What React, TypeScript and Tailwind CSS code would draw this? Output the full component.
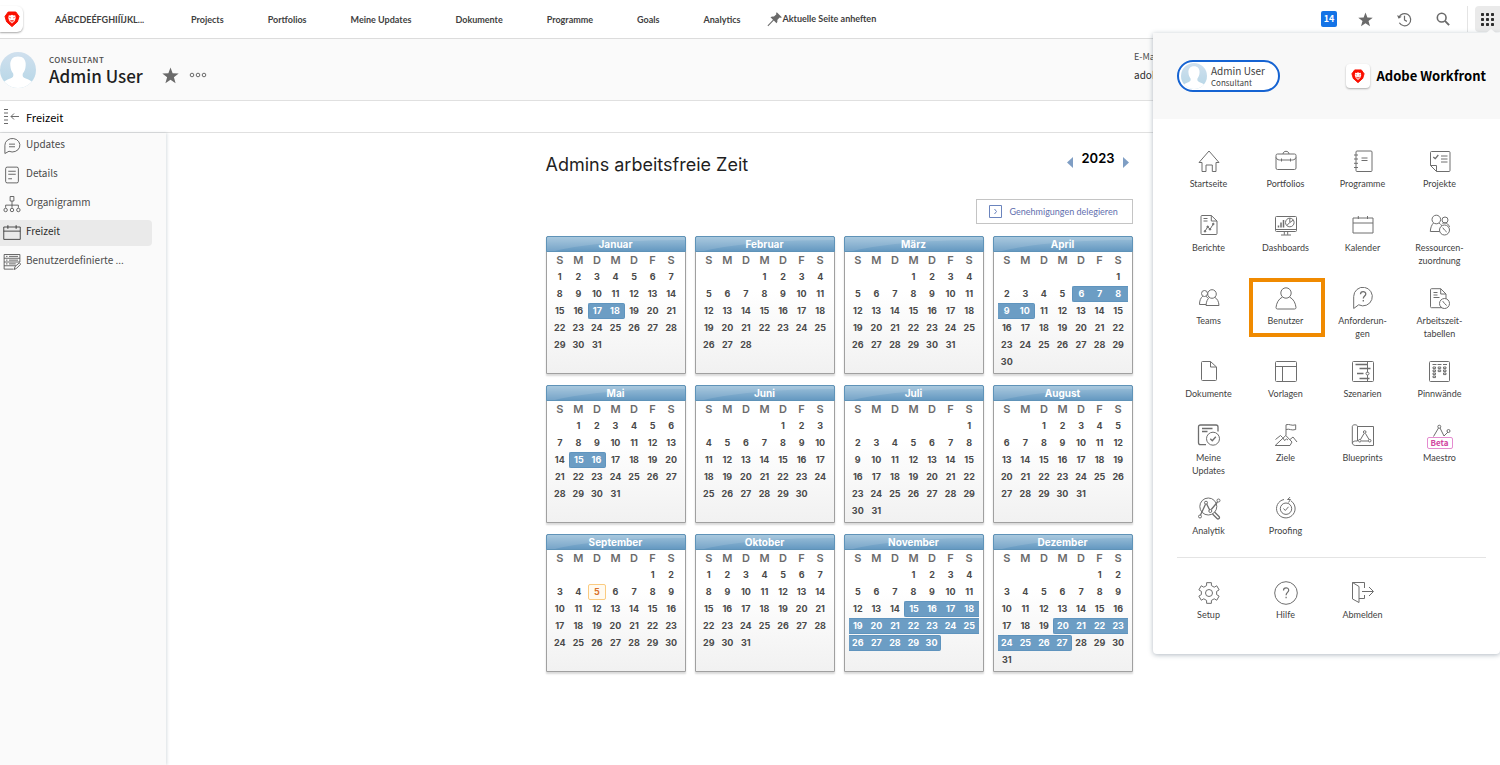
import type { ReactNode } from "react";

const NAV = ["Projects", "Portfolios", "Meine Updates", "Dokumente", "Programme", "Goals", "Analytics"];
const MONTHS = ["Januar", "Februar", "März", "April", "Mai", "Juni", "Juli", "August", "September", "Oktober", "November", "Dezember"];
const WEEKDAYS = ["S", "M", "D", "M", "D", "F", "S"];
const YEAR = 2023;
const TODAY = { month: 8, day: 5 };
const TIME_OFF: Record<number, [number, number]> = {
  0: [17, 18],
  3: [6, 10],
  4: [15, 16],
  10: [15, 30],
  11: [20, 27],
};

function Icon({ children, className = "size-6" }: { children: ReactNode; className?: string }) {
  return (
    <svg viewBox="0 0 24 24" className={className} fill="none" stroke="currentColor" strokeWidth="1" strokeLinejoin="round" aria-hidden="true">
      {children}
    </svg>
  );
}

function Lion({ className }: { className: string }) {
  return (
    <svg viewBox="0 0 16 16" className={className} aria-hidden="true">
      <path d="M4.200 1h7.600l3.200 4.400-1.600 5.400L8 15.600 2.600 10.800 1 5.400z" fill="#fa0f00" stroke="#fa0f00" strokeWidth="1" strokeLinejoin="round" />
      <path d="M4.800 4.200l1.500.4L8 3.800l1.700.8 1.500-.4.500 2.800-1 3L8 12.500l-2.700-2.500L4.300 7z" fill="#fff" />
      <path d="M5.200 6.300l1.800.7M10.800 6.300L9 7M7.200 9.500h1.600L8 10.500zM8 10.500v1.200M6 8.800l.8 1.800M10 8.800l-.8 1.800" fill="#fa0f00" stroke="#fa0f00" strokeWidth=".6" />
    </svg>
  );
}

function Avatar({ className }: { className: string }) {
  return (
    <svg viewBox="0 0 36 36" className={className} aria-hidden="true">
      <defs>
        <linearGradient id="sky" x1="0" y1="0" x2="0" y2="1">
          <stop offset="0" stopColor="#d0e0ee" />
          <stop offset="1" stopColor="#b5d6e6" />
        </linearGradient>
        <clipPath id="disc">
          <circle cx="18" cy="18" r="18" />
        </clipPath>
      </defs>
      <g clipPath="url(#disc)">
        <rect width="36" height="36" fill="url(#sky)" />
        <path d="M18 4.500c5.400 0 8 3.400 7.700 8.800-.2 4-1.400 6.400-2.900 8.200-.6 2.700.2 4 3 5.100 3.700 1.400 6.200 2.600 8.200 5.400V36H2v-4c2-2.800 4.500-4 8.200-5.400 2.800-1.100 3.600-2.400 3-5.100-1.500-1.800-2.700-4.200-2.900-8.200C10 7.900 12.600 4.500 18 4.500z" fill="#fff" />
      </g>
    </svg>
  );
}

function Star({ className }: { className: string }) {
  return (
    <svg viewBox="0 0 16 16" className={className} fill="#6a6a6a" aria-hidden="true">
      <path d="M8 .5l2 5.300 5.700.2-4.500 3.600 1.600 5.600L8 12l-4.800 3.200 1.600-5.600L.3 6 6 5.800z" />
    </svg>
  );
}

const Head = (p: { cx: number; cy: number; r: number }) => <circle {...p} />;
const Clock = ({ cx, cy }: { cx: number; cy: number }) => (
  <>
    <circle cx={cx} cy={cy} r="5" fill="#fff" />
    <path d={`M${cx - 1.8} ${cy - 2.4}L${cx} ${cy}l2.200 2`} />
  </>
);

const gearPoints = Array.from({ length: 6 }, (_, i) =>
  [
    [-13, 10.6],
    [13, 10.6],
    [18, 7.8],
    [42, 7.8],
  ].map(([deg, r]) => {
    const a = ((i * 60 + deg - 90) * Math.PI) / 180;
    return `${(12 + r * Math.cos(a)).toFixed(2)},${(12 + r * Math.sin(a)).toFixed(2)}`;
  }),
)
  .flat()
  .join(" ");

const calendarIcon = (
  <>
    <path d="M2 4h20v15H2zM2 9h20" />
    <path d="M7.300 2v3M16.500 2v3" />
  </>
);

type Item = { label: string[]; icon: ReactNode; marked?: boolean; beta?: boolean };

const ITEMS: Item[] = [
  { label: ["Startseite"], icon: <path d="M2 12.500L12 1l10 11.500M2 12.500h3v9h4v-6.500h6.300v6.500H19v-9h3" /> },
  {
    label: ["Portfolios"],
    icon: (
      <>
        <rect x="2" y="4" width="20" height="15.500" rx="1.500" />
        <path d="M9 4c0-3.600 6-3.600 6 0M2 7.500c1 2.500 3 2.500 4.500 2.500h11c1.500 0 3.500 0 4.500-2.500M7.500 8.500v3M16.500 8.500v3" />
      </>
    ),
  },
  {
    label: ["Programme"],
    icon: (
      <>
        <rect x="5" y="1" width="16" height="20.500" rx="1" />
        <path d="M3 5h4M3 9h4M3 13.300h4M3 17.500h4M10.500 8h6M10.500 10.500h6" />
      </>
    ),
  },
  {
    label: ["Projekte"],
    icon: (
      <>
        <path d="M2.500 15.500V2.500q0-1 1-1H21q1 0 1 1v18q0 1-1 1H8.500zM2.500 15.500h6v6M13 6h6.500M13 9h6.500M13 12h6.500" />
        <path d="M5.300 7l2 1.700L10.300 5" strokeWidth="1.300" />
      </>
    ),
  },
  {
    label: ["Berichte"],
    icon: (
      <>
        <path d="M14.300 1.500H5q-1 0-1 1v17q0 1 1 1h14q1 0 1-1V7zM14.300 1.500V7H20M6.500 4.500h4M6.500 7h4M8 17.300l2.700-4.500 2.300 2.500 3.300-5.300" />
        <g fill="#6e6e6e"><circle cx="8" cy="17.300" r=".8" /><circle cx="10.700" cy="12.800" r=".8" /><circle cx="13" cy="15.300" r=".8" /><circle cx="16.300" cy="10" r=".8" /></g>
      </>
    ),
  },
  {
    label: ["Dashboards"],
    icon: (
      <>
        <rect x="1.500" y="2.500" width="21" height="15" rx="1" />
        <path d="M1.500 15.500h21M10.300 17.500v3.300M13.700 17.500v3.300M7 21h10M15.800 8.500V4.200M15.800 8.500l3.600-2.500M15.800 8.500l-3 3" />
        <path d="M4.500 13.500v-2M7 13.500v-5M9.500 13.500V6" strokeWidth="1.500" />
        <circle cx="15.800" cy="8.500" r="4.300" />
      </>
    ),
  },
  { label: ["Kalender"], icon: calendarIcon },
  {
    label: ["Ressourcen-", "zuordnung"],
    icon: (
      <>
        <Head cx={8.300} cy={5.500} r={4.300} />
        <Head cx={17} cy={6} r={3} />
        <path d="M5.500 9C3.500 11 2.500 14 2.300 17.500h9.500M11 9c1.500.8 2.200 2 2.800 3M14.500 9.500c3-1.500 6 .2 7 3.500" />
        <Clock cx={16.500} cy={16} />
      </>
    ),
  },
  {
    label: ["Teams"],
    icon: (
      <>
        <Head cx={7.500} cy={6.500} r={3} />
        <Head cx={15} cy={7} r={4.300} />
        <path d="M12.300 10.500C10.500 12 9.300 14.500 9 18.500h13c-.3-4-1.500-6.500-4-8M5.800 9.200C3.500 10.800 2.500 14 2.500 17.500h6.500M9.200 9.200l1.500 1.800" />
      </>
    ),
  },
  {
    label: ["Benutzer"],
    marked: true,
    icon: (
      <>
        <Head cx={12} cy={6} r={5.200} />
        <path d="M8.500 10C4.500 12 2.500 16 2 20.500q0 1.500 1.500 1.500h17q1.500 0 1.500-1.500C21.500 16 19.500 12 15.500 10" />
      </>
    ),
  },
  {
    label: ["Anforderun-", "gen"],
    icon: (
      <>
        <path d="M2.700 21.500v-12a9.300 9.300 0 1 1 5 8.300z" />
        <path d="M9.500 7.300c0-3.600 5.300-3.500 5.300-.3 0 2-2.500 2.200-2.500 4.500M12.300 13v1.600" strokeWidth="1.300" />
      </>
    ),
  },
  {
    label: ["Arbeitszeit-", "tabellen"],
    icon: (
      <>
        <path d="M12.700 1.700H3.500q-1 0-1 1v17q0 1 1 1H18V7zM12.700 1.700V7H18M5.500 5.500h4M5.500 8h4M5.500 10.500h6" />
        <Clock cx={16.500} cy={16.500} />
      </>
    ),
  },
  { label: ["Dokumente"], icon: <path d="M13.500 1.500h-8q-1 0-1 1v17q0 1 1 1h13q1 0 1-1V7zM13.500 1.500V7h6" /> },
  {
    label: ["Vorlagen"],
    icon: (
      <>
        <rect x="1.500" y="1.500" width="21" height="20" rx="1" />
        <path d="M1.500 6.500h21M8.500 6.500v15" />
      </>
    ),
  },
  {
    label: ["Szenarien"],
    icon: (
      <>
        <rect x="1.500" y="1.500" width="21" height="20" rx="1" />
        <path d="M16.500 2v10.500M16.500 15v6" />
        <path d="M4.500 4.500h12M8.500 8.500h11M6 13.500h6.500M8.500 18.500h10" strokeWidth="1.500" />
        <circle cx="16.500" cy="13.500" r="1.500" />
      </>
    ),
  },
  {
    label: ["Pinnwände"],
    icon: (
      <>
        <rect x="1.500" y="1.500" width="20" height="20" rx="1" />
        <path d="M4.500 4.500h4M9.500 4.500h4M15 4.500h4" />
        <g strokeWidth="1">
          {[7, 10, 13, 16].map((y) => <rect key={y} x="5" y={y} width="2.500" height="1.600" />)}
          {[7, 10].map((y) => <rect key={y} x="10.200" y={y} width="2.500" height="1.600" />)}
          {[7, 10, 13].map((y) => <rect key={y} x="15.500" y={y} width="2.500" height="1.600" />)}
        </g>
      </>
    ),
  },
  {
    label: ["Meine", "Updates"],
    icon: (
      <>
        <path d="M9 20.700H3.500q-2 0-2-2V3q0-2 2-2H19q2 0 2 2v4.500M5 4.500h10.500M5 7.500h5.500" strokeWidth="1.300" />
        <circle cx="16" cy="14.700" r="6.500" />
        <path d="M13.300 14.700l2 2 3.500-4" strokeWidth="1.300" />
      </>
    ),
  },
  {
    label: ["Ziele"],
    icon: <path d="M12 11.500V.8c3.500-1.300 5.500 1.500 9.700 0v4.700c-4.200 1.500-6.200-1.200-9.700 0M1.200 21.500L11.800 11.500 18 18l-2 3.500zM9 14l1.500 2.500 2-1.500 1.500 1M1.500 15.500L6.500 11.500l2.200 2.200M16 15.500l3-2.500 4 5" />,
  },
  {
    label: ["Blueprints"],
    icon: (
      <>
        <path d="M6.500 2.500h16v19h-18c-4 0-4-4.500 0-4.500h2V2.500c0-2.300-5.200-2.300-5.200 0v17" />
        <path d="M13 9.500l-3.500 6M14.500 9.500l3.500 6M10.500 17h7" />
        <g fill="#fff"><circle cx="13.700" cy="8" r="1.300" /><circle cx="8.800" cy="16.700" r="1.300" /><circle cx="18.700" cy="16.700" r="1.300" /></g>
      </>
    ),
  },
  {
    label: ["Maestro"],
    beta: true,
    icon: (
      <>
        <path d="M5.500 12.500L10.500 4M12 4l4 8M16 12l4-4" />
        <circle cx="11.300" cy="2.700" r="1.500" />
        <circle cx="20.500" cy="7" r="1.500" />
      </>
    ),
  },
  {
    label: ["Analytik"],
    icon: (
      <>
        <circle cx="11.300" cy="9.500" r="8.500" />
        <path d="M17.500 15l4.500 4.500c1.500 1.500-.8 3.300-2 2L15.500 17M3.500 18L8.500 7.300M9.700 7l3 6M14.300 12.500L20.500 5" strokeWidth="1.300" />
        <circle cx="3" cy="19.500" r="1.500" />
        <circle cx="9" cy="5.700" r="1.500" />
        <circle cx="13.300" cy="14" r="1.500" />
        <circle cx="21.500" cy="3.500" r="1.500" />
      </>
    ),
  },
  {
    label: ["Proofing"],
    icon: (
      <>
        <path d="M10 2.500A9.300 9.300 0 1 0 17 3.900M13.500 2.500h3l-2 3M13.500 2.500L16.300 0" />
        <circle cx="12" cy="11.700" r="5.700" />
        <path d="M9.500 11.500l1.800 2 3.200-3.700" />
      </>
    ),
  },
];

const FOOTER_ITEMS: Item[] = [
  {
    label: ["Setup"],
    icon: (
      <>
        <polygon points={gearPoints} />
        <circle cx="12" cy="12" r="3.500" />
      </>
    ),
  },
  {
    label: ["Hilfe"],
    icon: (
      <>
        <circle cx="12" cy="12" r="11.300" />
        <path d="M9.500 9.500c0-3.500 5.200-3.500 5.200-.3 0 2.200-2.600 2.300-2.600 5M12.100 15.700v1.600" strokeWidth="1.200" />
      </>
    ),
  },
  {
    label: ["Abmelden"],
    icon: <path d="M1.500 1.500L8 5.500V21.500L1.500 18zM1.500 1.500H13.500V7M13.500 14v3.500H8M11 10.500h11M18 6l4.500 4.500L18 15" />,
  },
];

function MenuItem({ item }: { item: Item }) {
  return (
    <a href="#" className="relative flex flex-col items-center text-[#3f3f3f]">
      <span className="flex h-7 items-center text-[#6e6e6e]">
        <Icon>{item.icon}</Icon>
      </span>
      {item.beta && (
        <span className="absolute top-[15px] h-3 w-[26px] rounded-xs border border-[#e58cd0] bg-white text-center text-[8px] leading-[10px] font-bold text-[#d1449f]">Beta</span>
      )}
      <span className="mt-px pb-[18px] text-center font-['Lato',sans-serif] text-[9px] leading-[13px]">
        {item.label.map((line) => (
          <span key={line} className="block">{line}</span>
        ))}
      </span>
      {item.marked && <span className="absolute -top-[7px] left-0.5 h-[59px] w-[76px] border-4 border-[#f08a00]" />}
    </a>
  );
}

function AppMenu() {
  return (
    <aside className="absolute top-[33px] right-0 w-[347px] rounded-b-sm bg-white shadow-[0_1px_5px_rgba(60,80,100,0.4)]">
      <div className="flex h-[86px] items-center justify-between bg-[#f8f8f8] pr-3.5 pl-6">
        <a href="#" className="flex h-8 w-[103px] items-center gap-1 rounded-full border-2 border-[#1563d2] bg-white pl-0.5">
          <Avatar className="size-[26px]" />
          <span className="text-[#3f3f3f]">
            <span className="block text-[10px] leading-3">Admin User</span>
            <span className="block text-[8px] leading-[11px]">Consultant</span>
          </span>
        </a>
        <div className="flex items-center gap-1.5">
          <span className="flex size-6 items-center justify-center rounded-sm bg-white shadow-[0_1px_2px_rgba(0,0,0,0.3)]">
            <Lion className="size-3.5" />
          </span>
          <span className="text-[13px] leading-5 font-bold text-black">Adobe Workfront</span>
        </div>
      </div>
      <div className="grid auto-rows-[minmax(64px,auto)] grid-cols-[repeat(4,77px)] pt-[29px] pl-[17px]">
        {ITEMS.map((item) => (
          <MenuItem key={item.label[0]} item={item} />
        ))}
      </div>
      <hr className="-mt-0.5 mr-3.5 ml-6 border-[#e4e4e4]" />
      <div className="grid grid-cols-[repeat(4,77px)] pt-[21px] pb-[15px] pl-[17px]">
        {FOOTER_ITEMS.map((item) => (
          <MenuItem key={item.label[0]} item={item} />
        ))}
      </div>
    </aside>
  );
}

function Month({ index }: { index: number }) {
  const first = new Date(YEAR, index, 1).getDay();
  const days = new Date(YEAR, index + 1, 0).getDate();
  const weeks = Array.from({ length: Math.ceil((first + days) / 7) }, (_, w) => Array.from({ length: 7 }, (_, d) => w * 7 + d - first + 1));
  const off = TIME_OFF[index];
  const cell = (day: number) => {
    if (off && day >= off[0] && day <= off[1]) {
      const ends = `${day === off[0] ? "rounded-l-xs border-l" : ""} ${day === off[1] ? "rounded-r-xs border-r" : ""}`;
      return `border-y border-[#5f94be] bg-[#6c9dc4] text-white leading-[14px] ${ends}`;
    }
    if (index === TODAY.month && day === TODAY.day) return "rounded-xs border border-[#fbcb80] bg-[#fffaf0] text-[#d9722b] leading-[14px]";
    return "leading-4 text-[#4a4a4a]";
  };
  return (
    <section className="h-[138px] rounded-t-xs border border-[#a0a0a0] bg-linear-to-b from-white from-40% to-[#f1f1f1] shadow-[0_2px_2px_rgba(0,0,0,0.15)]">
      <h2 className="relative -mx-px -mt-px h-4 overflow-hidden rounded-t-xs border border-[#5f93b8] bg-linear-to-b from-[#9dc1da] to-[#6599c1] text-center text-[10px] leading-[14px] font-bold text-white">
        <svg viewBox="0 0 138 14" preserveAspectRatio="none" className="absolute inset-0 size-full" fill="#fff" fillOpacity=".12" aria-hidden="true">
          <path d="M0 0h138v3C90 3 40 6 8 14H0z" />
        </svg>
        <span className="relative">{MONTHS[index]}</span>
      </h2>
      <div className="px-1">
        <table className="w-full table-fixed border-separate border-spacing-0 text-center text-[9px] font-bold">
          <thead>
            <tr>
              {WEEKDAYS.map((d, i) => (
                <th key={i} className="h-[17px] p-0 text-[11px] leading-[17px] font-semibold text-[#6b6b6b]">{d}</th>
              ))}
            </tr>
          </thead>
          <tbody>
            {weeks.map((week, w) => (
              <tr key={w}>
                {week.map((day) => (
                  <td key={day} className="h-[17px] p-0 align-top">
                    {day > 0 && day <= days && <span className={`block h-4 ${cell(day)}`}>{day}</span>}
                  </td>
                ))}
              </tr>
            ))}
          </tbody>
        </table>
      </div>
    </section>
  );
}

const SIDE: { label: string; icon: ReactNode; active?: boolean }[] = [
  { label: "Updates", icon: <path d="M2.500 22V11a10 9 0 1 1 5.500 8zM8 9.500h8M8 13h8" /> },
  {
    label: "Details",
    icon: (
      <>
        <rect x="3.500" y="1.500" width="17" height="21" rx="2" />
        <path d="M7 7h10M7 11h10M7 17h5" />
      </>
    ),
  },
  {
    label: "Organigramm",
    icon: (
      <>
        <path d="M9.500 2h5v6h-5zM12 8v9M3.500 17v-3.500h17V17" />
        <circle cx="3.500" cy="20" r="2.300" />
        <circle cx="12" cy="20" r="2.300" />
        <circle cx="20.500" cy="20" r="2.300" />
      </>
    ),
  },
  { label: "Freizeit", active: true, icon: <path d="M1 4h22v16.500H1zM1 9.500h22M6.500 1.500v5M17.500 1.500v5" /> },
  { label: "Benutzerdefinierte ...", icon: <path d="M22.500 12V2h-21v19.500H14M1.500 7h21M1.500 12h21M1.500 17H17M4 4.500h2M8 4.500h12M4 9.500h2M8 9.500h12M4 14.500h2M8 14.500h9M15 22l1-4 6-5 1.500 2-5.500 5.500z" /> },
];

export default function App() {
  return (
    <div className="relative flex min-h-screen flex-col overflow-hidden bg-white font-['Noto_Sans_CJK_SC','Open_Sans',sans-serif] text-[#2c2c2c]">
      <header className="flex h-[39px] items-center border-b border-[#dcdcdc]">
        <a href="#" aria-label="Adobe Workfront" className="flex h-[26px] w-[23px] items-center justify-center rounded-r-md bg-white shadow-[0_1px_2px_rgba(0,0,0,0.35)]">
          <Lion className="size-4" />
        </a>
        <nav className="ml-8 flex items-center gap-11 pt-0.5 font-['Lato',sans-serif] text-[9px] leading-4 font-bold text-[#3f3f3f]">
          <a href="#" className="w-[92px]">AÁBCDEÉFGHIÍÏJKL...</a>
          {NAV.map((n) => (
            <a key={n} href="#">{n}</a>
          ))}
        </nav>
        <button type="button" className="ml-[26px] flex items-center font-['Lato',sans-serif] text-[9px] leading-4 font-bold text-[#3f3f3f]">
          <svg viewBox="0 0 16 16" className="size-4" fill="#6a6a6a" aria-hidden="true">
            <path d="M9.800 1.200l5 5c-.6.700-1.500.7-2.200.3L10.300 9c.3 1.500 0 2.500-.8 3.200L6.800 9.600 1.200 15.300l-.7-.7L6 8.800 3.500 6.300C4.300 5.500 5.500 5.300 7 5.600l2.400-2.300c-.4-.7-.3-1.500.4-2.100z" />
          </svg>
          Aktuelle Seite anheften
        </button>
        <div className="ml-auto flex h-full items-center">
          <button type="button" className="h-4 w-4 rounded-xs bg-[#1473e6] text-[9px] leading-4 font-bold text-white">14</button>
          <button type="button" aria-label="Favoriten" className="ml-[21px]"><Star className="size-[15px]" /></button>
          <button type="button" aria-label="Verlauf" className="ml-6 text-[#6a6a6a]">
            <svg viewBox="0 0 16 16" className="size-[15px]" fill="none" stroke="currentColor" strokeWidth="1.300" aria-hidden="true">
              <path d="M2 6a6.500 6.500 0 1 1 .5 5.500M8 4v4.500l2.500 1.500" />
              <path d="M0 3.500l1.800 3.800L5 5z" fill="currentColor" stroke="none" />
            </svg>
          </button>
          <button type="button" aria-label="Suchen" className="ml-6 text-[#6a6a6a]">
            <svg viewBox="0 0 16 16" className="size-[14px]" fill="none" stroke="currentColor" strokeWidth="1.800" aria-hidden="true">
              <circle cx="6.500" cy="6.500" r="5" />
              <path d="M10.200 10.200l4.800 4.800" strokeWidth="2.200" />
            </svg>
          </button>
          <span className="ml-[17px] h-[26px] w-px bg-[#e4e4e4]" />
          <button type="button" aria-label="Hauptmenü" className="ml-[7px] flex h-[26px] w-[25px] items-center justify-center rounded-l-sm bg-[#eaeaea]">
            <svg viewBox="0 0 13 13" className="size-[13px]" fill="#2c2c2c" aria-hidden="true">
              {[0, 5, 10].map((x) => [0, 5, 10].map((y) => <rect key={`${x}-${y}`} x={x} y={y} width="3" height="3" rx=".7" />))}
            </svg>
          </button>
        </div>
      </header>

      <div className="flex h-[62px] items-center border-b border-[#e0e0e0] bg-[#fafafa]">
        <Avatar className="size-9" />
        <div className="ml-[13px]">
          <p className="text-[8px] leading-3 font-medium tracking-wider text-[#4b4b4b]">CONSULTANT</p>
          <h1 className="text-[17px] leading-5 font-medium text-[#1f1f1f]">Admin User</h1>
        </div>
        <button type="button" aria-label="Favorit" className="mt-3 ml-[19px]"><Star className="size-[17px]" /></button>
        <button type="button" aria-label="Mehr" className="mt-2.5 ml-2.5">
          <svg viewBox="0 0 18 6" className="h-1.5 w-[18px]" fill="none" stroke="#6a6a6a" aria-hidden="true">
            <circle cx="3" cy="3" r="1.800" /><circle cx="9" cy="3" r="1.800" /><circle cx="15" cy="3" r="1.800" />
          </svg>
        </button>
        <dl className="ml-auto w-[366px] pb-2 text-[9px] leading-[18px]">
          <dt className="text-[#4b4b4b]">E-Mail</dt>
          <dd className="text-[10px]">adobe</dd>
        </dl>
      </div>

      <div className="flex h-8 items-center border-b border-[#e0e0e0]">
        <button type="button" aria-label="Seitenleiste einklappen" className="ml-1">
          <svg viewBox="0 0 15 17" className="h-[17px] w-[15px]" fill="none" stroke="#6a6a6a" aria-hidden="true">
            <path d="M0 1.500h4M0 5h4M0 8.500h4M0 12h4M0 15.500h4M7 8.500h8M10 5.500l-3 3 3 3" />
          </svg>
        </button>
        <span className="ml-[7px] text-[11px] leading-4 text-black">Freizeit</span>
      </div>

      <div className="flex flex-1">
        <nav className="w-[166px] shrink-0 bg-[#fafafa] shadow-[1px_0_3px_rgba(60,90,110,0.2)]">
          <ul className="flex flex-col gap-[3px]">
            {SIDE.map((s) => (
              <li key={s.label}>
                <a
                  href="#"
                  className={`flex h-[26px] w-[152px] items-center gap-[5px] rounded-r-sm pl-[3px] text-[10px] leading-4 whitespace-nowrap ${s.active ? "bg-[#eaeaea] text-[#2c2c2c]" : "text-[#4b4b4b]"}`}
                >
                  <Icon className="size-[18px] shrink-0">
                    <g strokeWidth="1.100">{s.icon}</g>
                  </Icon>
                  <span className="pb-1">{s.label}</span>
                </a>
              </li>
            ))}
          </ul>
        </nav>

        <main className="flex flex-1 justify-center pt-4 pl-3 font-['Inter',sans-serif]">
          <div className="w-[587px]">
            <div className="flex h-8 items-start justify-between">
              <h1 className="text-lg leading-8 text-[#1f1f1f]">Admins arbeitsfreie Zeit</h1>
              <div className="flex items-center gap-2 text-[13px] leading-4 font-semibold text-black">
                <button type="button" aria-label="Vorheriges Jahr" className="pt-2">
                  <svg viewBox="0 0 6 11" className="h-[11px] w-1.5" fill="#7f9ec4" aria-hidden="true"><path d="M6 0v11L0 5.500z" /></svg>
                </button>
                <span className="pb-0.5">{YEAR}</span>
                <button type="button" aria-label="Nächstes Jahr" className="pt-2 pr-1">
                  <svg viewBox="0 0 6 11" className="h-[11px] w-1.5" fill="#7f9ec4" aria-hidden="true"><path d="M0 0v11l6-5.500z" /></svg>
                </button>
              </div>
            </div>
            <button type="button" className="mt-[18px] ml-auto flex h-[25px] w-[157px] items-center gap-2 border border-[#c4c4c4] pl-3 font-['Lato',sans-serif] text-[9px] leading-4 whitespace-nowrap text-[#5f6fae]">
              <svg viewBox="0 0 13 13" className="size-[13px] shrink-0" fill="none" stroke="#6b84bd" aria-hidden="true">
                <path d="M.5.500h12v12H.5zM5.500 4l2 2.500-2 2.500" />
              </svg>
              Genehmigungen delegieren
            </button>
            <div className="mt-3 grid grid-cols-4 gap-x-[9px] gap-y-[11px]">
              {MONTHS.map((m, i) => (
                <Month key={m} index={i} />
              ))}
            </div>
          </div>
        </main>
      </div>

      <AppMenu />
      <svg viewBox="0 0 12 5" className="absolute top-[29px] right-[3px] h-[5px] w-3" fill="#f8f8f8" aria-hidden="true"><path d="M6 0l6 5H0z" /></svg>
    </div>
  );
}
